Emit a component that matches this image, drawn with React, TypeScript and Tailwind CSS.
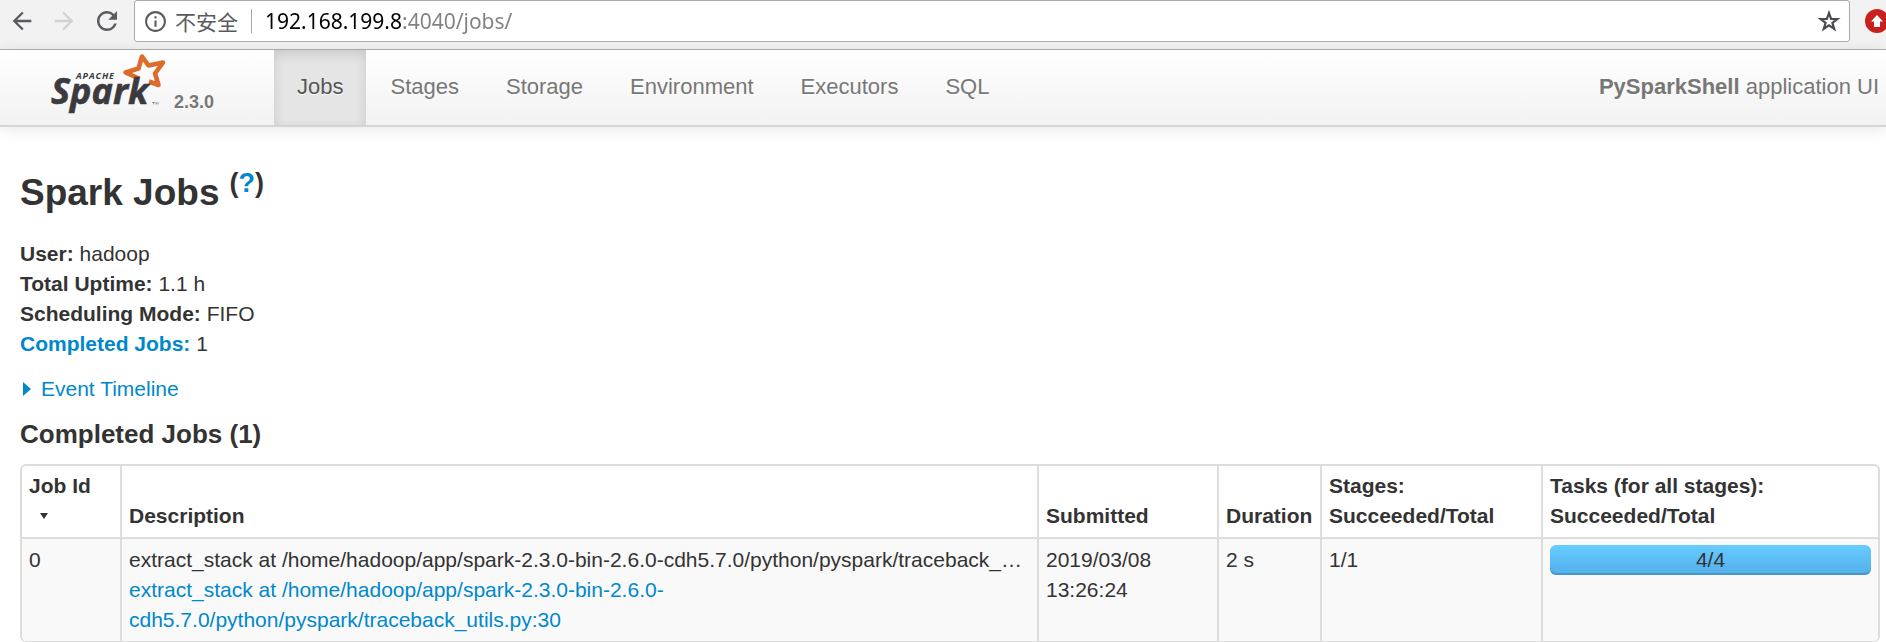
import type { ReactNode } from "react";
import { MdArrowBack, MdArrowForward, MdRefresh, MdInfoOutline } from "react-icons/md";

function SparkLogo() {
  return (
    <svg width="116" height="60" viewBox="0 0 116 60" role="img" aria-label="Apache Spark" className="overflow-visible [text-shadow:none]">
      <path
        d="M89 26.500 L75.500 20.500 L88.500 16.500 L92 4.500 L98.500 13.500 L113 10.500 L105 21.500 L108.500 33 L99 29.500"
        fill="none"
        stroke="#dd6b2c"
        strokeWidth="4.600"
        strokeLinejoin="round"
      />
      <text x="26" y="27" fill="#3c3a3e" className="font-['Open_Sans',sans-serif] text-[9px] font-bold italic tracking-widest">
        APACHE
      </text>
      <text x="1" y="52" fill="#3c3a3e" stroke="#3c3a3e" strokeWidth="0.600" className="font-['Open_Sans',sans-serif] text-[36px] font-bold italic">
        Spark
      </text>
      <path d="M102 50.500h3M103.500 50.500v2M106 52.500v-2l1 1 1-1v2" stroke="#777" strokeWidth="0.700" fill="none" />
    </svg>
  );
}

function BrowserBar() {
  return (
    <div className="flex h-[50px] items-start overflow-hidden border-b border-[#b0b0b0] bg-[#f2f2f2] text-[#5a5a5f]">
      <div className="flex h-[42px] w-[134px] shrink-0 items-center gap-[14px] pl-[8px]">
        <button aria-label="Back"><MdArrowBack size={28} /></button>
        <button aria-label="Forward" className="text-[#d2d2d2]"><MdArrowForward size={28} /></button>
        <button aria-label="Reload"><MdRefresh size={30} /></button>
      </div>
      <div className="flex h-[42px] min-w-0 flex-1 items-center rounded-[3px] border border-[#a9a9a9] bg-white px-[8px]">
        <MdInfoOutline size={25} className="shrink-0" />
        <span className="ml-[7px] shrink-0 font-['Noto_Sans_CJK_SC',sans-serif] text-[21px] leading-[30px]">不安全</span>
        <span className="mx-[13px] h-[24px] w-px shrink-0 bg-[#a9a9a9]" />
        <input
          aria-label="Address"
          defaultValue="192.168.199.8:4040/jobs/"
          className="h-[36px] min-w-0 flex-1 bg-[linear-gradient(to_right,#000_138px,#808080_138px)] bg-clip-text font-['Noto_Sans',sans-serif] text-[21px] text-transparent outline-none"
        />
        <button aria-label="Bookmark" className="shrink-0">
          <svg width="24" height="24" viewBox="0 0 24 24" fill="none" stroke="#4a4a4f" strokeWidth="2.200">
            <path d="M12 4l2.100 5.900 6.300.2-5 3.800 1.800 6-5.200-3.500-5.200 3.500 1.800-6-5-3.800 6.300-.2z" />
          </svg>
        </button>
      </div>
      <div className="flex h-[42px] w-[36px] shrink-0 items-center overflow-hidden pl-[15px]">
        <button aria-label="Extension" className="shrink-0">
          <svg width="24" height="24" viewBox="0 0 24 24">
            <circle cx="12" cy="12" r="12" fill="#c8201f" />
            <path d="M12 6l6 6.500h-3v5.500H9v-5.500H6z" fill="#fff" />
          </svg>
        </button>
      </div>
    </div>
  );
}

const tabs = ["Jobs", "Stages", "Storage", "Environment", "Executors", "SQL"];

function Navbar() {
  return (
    <header className="flex h-[77px] border-b-2 border-[#d4d4d4] bg-linear-to-b from-white to-[#f2f2f2] text-[22px] text-[#777] shadow-[0_2px_15px_rgba(0,0,0,0.1)] [text-shadow:0_1px_0_#fff]">
      <a href="#home" className="flex w-[274px] shrink-0 items-start pl-[50px] pt-[2px]">
        <SparkLogo />
        <span className="ml-[8px] mt-[38px] text-[18px] font-bold leading-[24px]">2.3.0</span>
      </a>
      <nav className="flex gap-px">
        {tabs.map((tab, i) => (
          <a
            key={tab}
            href={"#" + tab.toLowerCase()}
            className={
              i === 0
                ? "flex items-center bg-[#e5e5e5] px-[23px] pb-[2px] text-[#555] shadow-[inset_0_4px_12px_rgba(0,0,0,0.125)]"
                : "flex items-center px-[23px] pb-[2px]"
            }
          >
            {tab}
          </a>
        ))}
      </nav>
      <p className="ml-auto flex items-center whitespace-pre pb-[2px] pr-[7px]">
        <strong>PySparkShell</strong> application UI
      </p>
    </header>
  );
}

function Th({ children, first }: { children: ReactNode; first?: boolean }) {
  return (
    <th className={first ? "px-[7px] pb-[6px] pt-[5px] align-bottom" : "border-l-2 border-[#ddd] px-[7px] pb-[6px] pt-[5px] align-bottom"}>
      {children}
    </th>
  );
}

function Td({ children, first }: { children: ReactNode; first?: boolean }) {
  return (
    <td
      className={
        first
          ? "border-t-2 border-[#ddd] bg-[#f9f9f9] px-[7px] py-[6px] align-top"
          : "border-l-2 border-t-2 border-[#ddd] bg-[#f9f9f9] px-[7px] py-[6px] align-top"
      }
    >
      {children}
    </td>
  );
}

const callSite = "extract_stack at /home/hadoop/app/spark-2.3.0-bin-2.6.0-cdh5.7.0/python/pyspark/traceback_utils.py:30";

function JobsTable() {
  return (
    <div className="overflow-hidden rounded-[6px] border-2 border-b border-[#ddd]">
      <table className="w-full table-fixed border-separate border-spacing-0 text-left">
        <colgroup>
          <col className="w-[98px]" />
          <col />
          <col className="w-[180px]" />
          <col className="w-[103px]" />
          <col className="w-[221px]" />
          <col className="w-[337px]" />
        </colgroup>
        <thead>
          <tr>
            <Th first>
              Job Id
              <span className="flex h-[30px] items-center pl-[11px]">
                <svg width="8" height="6" viewBox="0 0 8 6" aria-hidden="true"><path d="M0 0h8L4 6z" fill="#333" /></svg>
              </span>
            </Th>
            <Th>Description</Th>
            <Th>Submitted</Th>
            <Th>Duration</Th>
            <Th>Stages: Succeeded/Total</Th>
            <Th>Tasks (for all stages): Succeeded/Total</Th>
          </tr>
        </thead>
        <tbody>
          <tr>
            <Td first>0</Td>
            <Td>
              <span className="block truncate">{callSite}</span>
              <a href="#job" className="block text-[#0088cc]">{callSite}</a>
            </Td>
            <Td>2019/03/08 13:26:24</Td>
            <Td>2 s</Td>
            <Td>1/1</Td>
            <Td>
              <div className="h-[30px] rounded-[6px] bg-linear-to-b from-[#66ccff] to-[#54aeea] text-center shadow-[inset_0_-2px_0_rgba(0,0,0,0.15)]">
                4/4
              </div>
            </Td>
          </tr>
        </tbody>
      </table>
    </div>
  );
}

export default function App() {
  return (
    <div className="bg-white font-['Liberation_Sans',Arial,sans-serif] text-[21px] leading-[30px] text-[#333]">
      <BrowserBar />
      <Navbar />
      <main className="pl-[20px] pr-[6px] pt-[36px]">
        <h1 className="flex items-start gap-[10px] text-[37px] font-bold leading-[60px]">
          Spark Jobs
          <sup className="top-0 text-[27px] leading-[40px]">
            (<a href="#help" className="text-[#0088cc]">?</a>)
          </sup>
        </h1>
        <ul className="mt-[16px]">
          <li><strong>User:</strong> hadoop</li>
          <li><strong>Total Uptime:</strong> 1.1 h</li>
          <li><strong>Scheduling Mode:</strong> FIFO</li>
          <li><a href="#completed" className="font-bold text-[#0088cc]">Completed Jobs:</a> 1</li>
        </ul>
        <a href="#timeline" className="mt-[15px] flex items-center gap-[10px] pl-[3px] text-[#0088cc]">
          <svg width="8" height="14" viewBox="0 0 8 14" aria-hidden="true"><path d="M0 0l8 7-8 7z" fill="#0088cc" /></svg>
          Event Timeline
        </a>
        <h2 id="completed" className="mb-[15px] mt-[15px] text-[26px] font-bold leading-[30px]">Completed Jobs (1)</h2>
        <JobsTable />
      </main>
    </div>
  );
}
